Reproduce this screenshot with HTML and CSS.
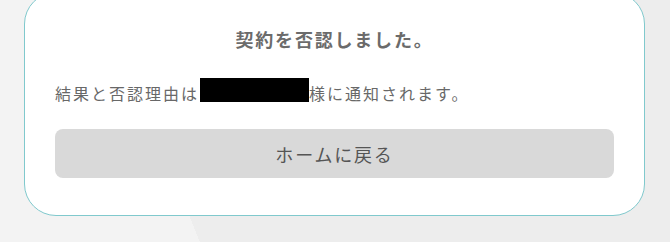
FILE: index.html
```html
<!DOCTYPE html>
<html lang="ja">
<head>
<meta charset="utf-8">
<title>契約を否認しました</title>
<link rel="stylesheet" href="styles.css">
</head>
<body>
  <main class="card">
    <h1 class="title">契約を否認しました。</h1>
    <p class="message">結果と否認理由は<span class="redacted"></span>様に通知されます。</p>
    <button class="home-btn" type="button">ホームに戻る</button>
  </main>
</body>
</html>
```
FILE: styles.css
```css
html, body {
  height: 100%;
}
body {
  margin: 0;
  padding: 0 25px 0 24px;
  box-sizing: border-box;
  overflow: hidden;
  font-family: "Noto Sans CJK JP", "Noto Sans", sans-serif;
  background: linear-gradient(68.2deg, #f3f3f3 185.5px, #ededed 185.5px);
}
.card {
  margin-top: -8px;
  background: #ffffff;
  border: 1px solid #80c9cd;
  border-radius: 32px;
  padding: 33px 30px 37px 30px;
  display: flex;
  flex-direction: column;
}
.title {
  margin: 0;
  font-size: 18px;
  line-height: 26px;
  font-weight: 700;
  letter-spacing: 0.1em;
  color: #6b6b6b;
  text-align: center;
}
.message {
  margin: 26px 0 0 0;
  font-size: 16px;
  line-height: 30px;
  letter-spacing: 2px;
  color: #686868;
}
.redacted {
  display: inline-block;
  width: 109px;
  height: 24px;
  background: #000;
  vertical-align: -2px;
  margin: 0 0 0 1px;
  letter-spacing: 0;
}
.home-btn {
  margin-top: 21px;
  height: 49px;
  border: none;
  border-radius: 8px;
  background: #d9d9d9;
  color: #555555;
  font-family: inherit;
  font-size: 18px;
  letter-spacing: 0.1em;
  padding: 0;
}
```
